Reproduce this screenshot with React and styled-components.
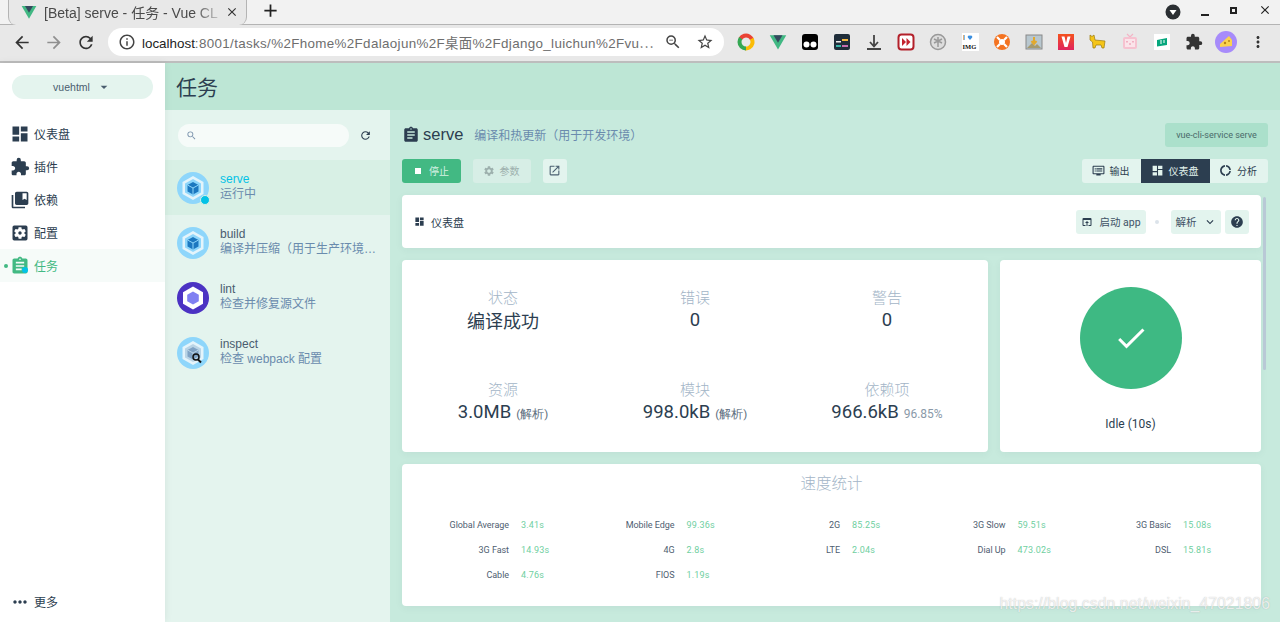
import React from "react";
import styled, { createGlobalStyle } from "styled-components";
import {
  MdDashboard, MdExtension, MdCollectionsBookmark, MdSettingsApplications, MdAssignment,
  MdMoreHoriz, MdRefresh, MdSearch, MdStop, MdSettings, MdOpenInNew, MdDvr, MdDonutLarge,
  MdOpenInBrowser, MdHelp, MdCheck, MdKeyboardArrowDown, MdArrowDropDown, MdArrowBack, MdArrowForward,
  MdClose, MdAdd, MdMoreVert, MdInfoOutline, MdZoomOut, MdStarBorder,
} from "react-icons/md";

const Global = createGlobalStyle`
  html, body { margin: 0; padding: 0; height: 622px; overflow: hidden; background: #fff; }
  body { font-family: Roboto, "Noto Sans CJK SC", sans-serif; color: #2c3e50; }
  * { box-sizing: border-box; }
`;

const Page = styled.div`
  width: 1280px; height: 622px; display: flex; flex-direction: column; overflow: hidden; position: relative;
`;

/* Browser chrome */
const TabStrip = styled.div`
  height: 25px; background: #f2f2f2; border-bottom: 1px solid #b4b4b4; display: flex; align-items: flex-end; padding-left: 8px; flex: none;
`;
const BrowserTab = styled.div`
  width: 239px; height: 25px; margin-bottom: -1px; background: #e8e8e8; border-radius: 0 0 8px 8px; border: 1px solid #b4b4b4; border-top: 0; border-bottom: 0;
  display: flex; align-items: center; padding: 0 7px 2px 12px; gap: 7px; font: 14px "Liberation Sans", "Noto Sans CJK SC", sans-serif; color: #4a4a4a;
`;
const TabTitle = styled.span`
  flex: 1; white-space: nowrap; overflow: hidden;
  -webkit-mask-image: linear-gradient(90deg, #000 86%, rgba(0,0,0,.25));
  mask-image: linear-gradient(90deg, #000 86%, rgba(0,0,0,.25));
`;
const NewTab = styled.div`
  margin-left: 13px; height: 25px; display: flex; align-items: center; color: #222; font-size: 21px; padding-bottom: 2px;
`;
const WindowButtons = styled.div`
  margin-left: auto; height: 24px; display: flex; align-items: center; padding-right: 8px; color: #222;
`;
const ProfileDot = styled.svg`
  width: 16px; height: 16px; margin-right: 20px;
`;
const WinMin = styled.span`
  width: 8px; height: 2px; background: #222; margin: 5px 21px 0 0;
`;
const WinMax = styled.span`
  width: 7px; height: 7px; border: 2px solid #222; margin: 0 21px 4px 0;
`;
const WinClose = styled(MdClose)`
  font-size: 14px; margin-bottom: 4px;
`;
const Toolbar = styled.div`
  height: 38px; background: #e8e8e8; border-bottom: 2px solid #bdbdbd; display: flex; align-items: center; padding: 0 13px 2px 12px; flex: none;
`;
const NavBtn = styled.div`
  width: 20px; height: 20px; margin-right: 12px; font-size: 21px; display: flex; align-items: center; justify-content: center; color: ${p => p.$dim ? "#8f8f8f" : "#333"};
`;
const Omnibox = styled.div`
  width: 616px; height: 28px; margin-left: 0; border-radius: 14px; background: #fff; display: flex; align-items: center; padding: 0 10px 0 10px; color: #333;
`;
const Url = styled.div`
  margin-left: 6px; flex: 1; white-space: nowrap; overflow: hidden; font: 13.4px "Liberation Sans", "Noto Sans CJK SC", sans-serif; color: #6e6e6e;
  letter-spacing: .34px;
  b { font-weight: 400; color: #222; letter-spacing: 0; }
`;
const OmniIcon = styled.span`
  display: flex; font-size: 18px; margin-left: ${p => p.$gap || 0}px; color: #444;
`;
const Extensions = styled.div`
  display: flex; margin-left: 13px; flex: 1; justify-content: space-between; align-items: center;
`;
const ExtSlot = styled.div`
  width: 18px; height: 18px; display: flex; align-items: center; justify-content: center; font-size: 18px; color: #333;
  svg { flex: none; }
`;

/* App layout */
const AppFrame = styled.div`
  flex: 1; display: flex; min-height: 0;
`;
const Sidebar = styled.aside`
  width: 165px; flex: none; background: #fff; display: flex; flex-direction: column; position: relative; z-index: 2; box-shadow: 0 0 8px rgba(0,0,0,.07); padding-bottom: 4px;
`;
const ProjectButton = styled.div`
  margin: 12px 12px 18px; height: 24px; border-radius: 12px; background: #e4f4ee; display: flex; align-items: center; justify-content: center; gap: 6px; font-size: 10.5px; font-family: "Liberation Sans", sans-serif; color: #4a5d6e;
  svg { font-size: 16px; color: #4a5d6e; }
`;
const NavItem = styled.div`
  height: 33px; display: flex; align-items: center; padding-left: 10px; gap: 4px; font-size: 12px; position: relative;
  background: ${p => p.$active ? "#f6fbf9" : "transparent"};
  color: ${p => p.$active ? "#42b983" : "#2c3e50"};
  svg { font-size: 20px; flex: none; color: ${p => p.$active ? "#42b983" : "#2c3e50"}; }
`;
const ActiveDot = styled.span`
  position: absolute; left: 4px; top: 15px; width: 4px; height: 4px; border-radius: 50%; background: #42b983;
`;
const NavBadge = styled.span`
  position: absolute; left: 22px; top: 18px; width: 6px; height: 6px; border-radius: 50%; background: #03c2e6;
`;
const MoreItem = styled(NavItem)`
  margin-top: auto;
  height: 33px;
`;
const Main = styled.main`
  flex: 1; display: flex; flex-direction: column; min-width: 0;
`;
const TopBar = styled.header`
  height: 47px; flex: none; background: #bde6d5; display: flex; align-items: center; padding: 0 12px 2px 11px; font-size: 21px; color: #2c3e50;
`;
const Split = styled.div`
  flex: 1; display: flex; min-height: 0;
`;
const TaskList = styled.section`
  width: 225px; flex: none; background: #e4f4ee; display: flex; flex-direction: column;
`;
const SearchRow = styled.div`
  height: 50px; flex: none; display: flex; align-items: center; padding: 0 12px 0 13px; gap: 10px;
`;
const SearchField = styled.div`
  width: 171px; height: 23px; border-radius: 12px; background: #f6fbf9; display: flex; align-items: center; padding-left: 8px; color: #7b93ad; font-size: 11px;
`;
const RefreshIcon = styled(MdRefresh)`
  font-size: 13px; color: #2c3e50;
`;
const TaskItem = styled.div`
  height: 55px; flex: none; display: flex; align-items: center; padding: 0 12px; gap: 11px;
  background: ${p => p.$active ? "#d8f0e5" : "transparent"};
`;
const TaskIconWrap = styled.div`
  width: 32px; height: 32px; flex: none; position: relative;
  svg { display: block; }
`;
const TaskDot = styled.span`
  position: absolute; right: 0; bottom: 0; width: 8px; height: 8px; border-radius: 50%; background: #03c2e6; border: 1px solid #d8f0e5; box-sizing: content-box; margin: 0 -1px -1px 0;
`;
const TaskText = styled.div`
  min-width: 0; flex: 1; line-height: 15px; font-size: 12px; padding-bottom: 1px; font-family: "Liberation Sans", "Noto Sans CJK SC", sans-serif;
`;
const TaskName = styled.div`
  color: ${p => p.$active ? "#03c2e6" : "#4a5d6e"};
`;
const TaskDesc = styled.div`
  color: #6a8bad; white-space: nowrap;
`;
const Content = styled.section`
  flex: 1; min-width: 0; background: #c7eadd; padding: 13px 12px 0 12px; position: relative;
`;
const TaskHead = styled.div`
  height: 24px; display: flex; align-items: center;
  & > svg { font-size: 18px; margin-left: 0; color: #2c3e50; }
`;
const TaskTitle = styled.span`
  margin: 0 0 1px 3px; font: 16.5px "Liberation Sans", sans-serif; color: #2c3e50;
`;
const TaskSub = styled.span`
  margin: 0 0 2px 11px; font-size: 12px; color: #6a8bad; font-family: "Noto Sans CJK SC", sans-serif;
`;
const CommandBadge = styled.span`
  margin-left: auto; width: 103px; height: 24px; border-radius: 3px; background: #abe0cb; color: #4a6a6a; font-size: 9px; display: flex; align-items: center; justify-content: center;
`;
const ActionRow = styled.div`
  height: 24px; margin-top: 12px; display: flex; align-items: center; gap: 12px;
`;
const ActionButton = styled.button`
  height: 24px; padding: 0 2px 1px 0; width: ${p => p.$w}px; border: 0; border-radius: 3px; font: 10px "Noto Sans CJK SC", sans-serif; display: flex; align-items: center; justify-content: center; gap: 5px;
  background: ${p => p.$bg}; color: ${p => p.$fg};
  svg { font-size: ${p => p.$icon || 12}px; flex: none; }
`;
const ViewTabs = styled.div`
  margin-left: auto; display: flex;
`;
const ViewTab = styled.button`
  height: 24px; width: ${p => p.$w}px; padding: 0 2px 1px 0; border: 0; font: 10px "Noto Sans CJK SC", sans-serif; display: flex; align-items: center; justify-content: center; gap: 5px;
  background: ${p => p.$active ? "#2c3e50" : "#e3f4ee"}; color: ${p => p.$active ? "#e3f4ee" : "#2c3e50"};
  border-radius: ${p => p.$first ? "3px 0 0 3px" : p.$last ? "0 3px 3px 0" : "0"};
  svg { font-size: 13px; flex: none; }
`;
const Cards = styled.div`
  margin-top: 12px; margin-right: 7px; display: flex; flex-direction: column; gap: 12px;
`;
const Card = styled.div`
  background: #fff; border-radius: 4px; box-shadow: 0 2px 8px rgba(44,62,80,.05);
`;
const DashHead = styled(Card)`
  height: 53px; display: flex; align-items: center; padding: 0 12px;
  font-size: 11px;
`;
const DashTitle = styled.span`
  display: flex; align-items: center; gap: 6px; color: #2c3e50;
  svg { font-size: 11px; }
`;
const DashActions = styled.div`
  margin-left: auto; display: flex; align-items: center; gap: 4px;
`;
const DashButton = styled.button`
  height: 24px; width: ${p => p.$w}px; padding: 0; border: 0; border-radius: 3px; background: #e3f4ee; color: #3f5266; font: 10.5px Roboto, "Noto Sans CJK SC", sans-serif; display: flex; align-items: center; justify-content: center; gap: 6px;
  svg { font-size: ${p => p.$icon || 12}px; color: #2c3e50; flex: none; }
`;
const Separator = styled.span`
  width: 4px; height: 4px; border-radius: 50%; background: #dce3ea; margin: 0 8px 0 5px;
`;
const StatsRow = styled.div`
  display: grid; grid-template-columns: 586px 1fr; grid-template-rows: 192px; gap: 12px; height: 192px;
`;
const StatsCard = styled(Card)`
  display: grid; grid-template-columns: repeat(3, 192px); grid-template-rows: 92px 70px; justify-content: center; padding-top: 28px;
`;
const Stat = styled.div`
  display: flex; flex-direction: column; align-items: center;
`;
const StatLabel = styled.div`
  font-size: 15px; line-height: 21px; color: #a3b5c7; font-weight: 300;
`;
const StatValue = styled.div`
  font-size: ${p => p.$cjk ? 18 : 18.5}px; line-height: 22px; color: #2c3e50; white-space: nowrap; font-family: ${p => p.$cjk ? '"Noto Sans CJK SC", sans-serif' : 'Roboto, sans-serif'};
  small { font-size: ${p => p.$muted ? 12 : 11.5}px; color: ${p => p.$muted ? "#8a99a8" : "#5d6e7e"}; margin-left: 5px; }
`;
const IdleCard = styled(Card)`
  display: flex; flex-direction: column; align-items: center; padding-top: 27px;
  font-size: 12px; color: #2c3e50;
`;
const IdleCircle = styled.div`
  width: 102px; height: 102px; border-radius: 50%; background: #3eb983; display: flex; align-items: center; justify-content: center; color: #fff; font-size: 36px; margin-bottom: 28px;
`;
const SpeedCard = styled(Card)`
  height: 142px; padding-top: 10px;
`;
const SpeedTitle = styled.div`
  text-align: center; font-size: 15.5px; line-height: 20px; color: #a3b5c7; font-weight: 300; margin-bottom: 18px;
`;
const SpeedGrid = styled.div`
  display: grid; grid-template-columns: repeat(5, 165.5px); grid-auto-rows: 25px; padding-left: 0;
`;
const SpeedCell = styled.div`
  display: grid; grid-template-columns: 107px auto; column-gap: 12px; align-items: center; font-size: 9px;
`;
const SpeedName = styled.span`
  text-align: right; color: #4f6071; white-space: nowrap; letter-spacing: -.05px;
`;
const SpeedVal = styled.span`
  color: #6fcf9f; letter-spacing: .2px;
`;
const ScrollThumb = styled.div`
  position: absolute; right: 14px; top: 87px; width: 3px; height: 173px; background: #b9c9d6; border-radius: 2px;
`;
const Watermark = styled.div`
  position: absolute; right: 10px; bottom: 9px; font: 15.7px "Liberation Sans", sans-serif; color: rgba(255,255,255,.75); text-shadow: 0 0 1px rgba(120,120,120,.5); letter-spacing: .1px;
`;

/* Drawings */
const VueLogo = ({ s = 16 }) => (
  <svg width={s} height={s} viewBox="0 0 24 24"><path d="M1 3h22L12 22z" fill="#41b883" /><path d="M6 3h12l-6 10z" fill="#35495e" /></svg>
);
const WebpackIcon = ({ dim, children }) => (
  <svg width="32" height="32" viewBox="0 0 32 32">
    <circle cx="16" cy="16" r="16" fill="#8ed6fb" />
    <path d="M16 4l10.5 6v12L16 28 5.5 22V10z" fill="#e4f4fb" />
    <path d="M16 7l8 4.6v8.8L16 25l-8-4.6v-8.8z" fill={dim ? "#b9d4e6" : "#8ed6fb"} />
    <path d="M16 10l5.5 3v6.4L16 22.5l-5.5-3.1V13z" fill={dim ? "#7fa2c4" : "#1c78c0"} />
    <path d="M10.5 13l5.5 3 5.5-3M16 16v6.5" stroke={dim ? "#b9d4e6" : "#8ed6fb"} strokeWidth="1" fill="none" />
    {children}
  </svg>
);
const LintIcon = () => (
  <svg width="32" height="32" viewBox="0 0 32 32">
    <circle cx="16" cy="16" r="16" fill="#4b32c3" />
    <path d="M16 4.5l10 5.8v11.4l-10 5.8-10-5.8V10.300z" fill="#fff" />
    <path d="M16 9.500l5.800 3.300v6.400L16 22.500l-5.800-3.300v-6.400z" fill="#8080f2" />
  </svg>
);
const Ext = {
  chrome: <svg width="18" height="18" viewBox="0 0 18 18"><circle cx="9" cy="9" r="6.5" fill="none" stroke="#ea4335" strokeWidth="4" strokeDasharray="14 100" transform="rotate(-150 9 9)" /><circle cx="9" cy="9" r="6.500" fill="none" stroke="#fbbc05" strokeWidth="4" strokeDasharray="14 100" transform="rotate(-30 9 9)" /><circle cx="9" cy="9" r="6.500" fill="none" stroke="#34a853" strokeWidth="4" strokeDasharray="14 100" transform="rotate(90 9 9)" /></svg>,
  tamper: <svg width="18" height="18" viewBox="0 0 18 18"><rect x="1" y="1" width="16" height="16" rx="3" fill="#000" /><circle cx="5.500" cy="11.500" r="3" fill="#fff" /><circle cx="12.500" cy="11.500" r="3" fill="#fff" /></svg>,
  bars: <svg width="18" height="18" viewBox="0 0 18 18"><rect x="1" y="1" width="16" height="16" rx="2" fill="#1f2d3a" /><rect x="9" y="6" width="6" height="2" fill="#f5b841" /><rect x="3" y="8" width="5" height="1.500" fill="#eee" /><rect x="3" y="12" width="5" height="2" fill="#36b3a8" /><rect x="9" y="12" width="6" height="2" fill="#c56fb0" /></svg>,
  down: <svg width="18" height="18" viewBox="0 0 18 18"><path d="M9 2v11M5 9l4 4.500L13 9M2 16h14" stroke="#444" strokeWidth="1.800" fill="none" /></svg>,
  ff: <svg width="18" height="18" viewBox="0 0 18 18"><rect x="1.500" y="1.500" width="15" height="15" rx="3" fill="#fff" stroke="#b3202a" strokeWidth="2" /><path d="M5 5l4 4-4 4zM9.500 5l4 4-4 4z" fill="#c4232e" /></svg>,
  palm: <svg width="18" height="18" viewBox="0 0 18 18"><circle cx="9" cy="9" r="7.500" fill="#ddd" stroke="#999" strokeWidth="1.500" /><path d="M9 4v10M5 6l8 4M13 6l-8 4" stroke="#999" strokeWidth="1.500" /></svg>,
  img: <svg width="18" height="18" viewBox="0 0 18 18"><rect x="1" y="0" width="17" height="18" fill="#fff" /><path d="M9 7L6.800 4.500a1.500 1.500 0 0 1 2.200-1.800 1.500 1.500 0 0 1 2.200 1.800z" fill="#3a8fe0" /><text x="2" y="7" fontSize="7" fontFamily="Liberation Sans" fill="#111">I</text><text x="1.500" y="16" fontSize="6.500" fontWeight="700" fontFamily="Liberation Serif" fill="#111">IMG</text></svg>,
  buoy: <svg width="18" height="18" viewBox="0 0 18 18"><circle cx="9" cy="9" r="8" fill="#f47321" /><circle cx="9" cy="9" r="3" fill="#fff" /><path d="M4 4l3 3M14 4l-3 3M4 14l3-3M14 14l-3-3" stroke="#fff" strokeWidth="2.200" /></svg>,
  pic: <svg width="18" height="18" viewBox="0 0 18 18"><rect x="1" y="2" width="16" height="14" fill="#b8c7cf" stroke="#888" /><path d="M2 15l5-5 3 3 2-2 4 4z" fill="#a59a6e" /><path d="M9 4v6M6.500 8L9 11l2.500-3" stroke="#e2a92c" strokeWidth="2" fill="none" /></svg>,
  vid: <svg width="18" height="18" viewBox="0 0 18 18"><defs><linearGradient id="vg" x1="0" y1="0" x2="0" y2="1"><stop offset="0" stopColor="#f4511e" /><stop offset="1" stopColor="#e0245e" /></linearGradient></defs><rect x="1" y="1" width="16" height="16" fill="url(#vg)" /><path d="M4.500 3.500h3L9 10l1.500-6.500h3L10.500 14h-3z" fill="#fff" /></svg>,
  cat: <svg width="18" height="18" viewBox="0 0 18 18"><path d="M1 2l2 1.500L5 2l1 5 10 1-1 7h-2l-1-3H7l-1 3H4l-.5-6L1 7z" fill="#f5c518" stroke="#9a7a10" strokeWidth=".7" /></svg>,
  tv: <svg width="18" height="18" viewBox="0 0 18 18"><path d="M6 1l3 3 3-3" stroke="#f3b4c6" strokeWidth="1.200" fill="none" /><rect x="2" y="4" width="14" height="12" rx="2" fill="#f6c2d0" /><rect x="4" y="6" width="10" height="8" fill="#fbe4ea" /><path d="M6 8v1.500M12 8v1.500M8 11h2" stroke="#ea8fa8" strokeWidth="1.200" /></svg>,
  book: <svg width="18" height="18" viewBox="0 0 18 18"><rect x="1" y="1" width="16" height="16" fill="#fff" /><path d="M4 7l5-1 5-1v7l-5 .8-5 .6z" fill="#06a77d" /><path d="M8 7v4M11 7v3" stroke="#fff" /></svg>,
  avatar: <svg width="22" height="22" viewBox="0 0 22 22"><circle cx="11" cy="11" r="11" fill="#a78bfa" /><path d="M5 13l9-8 3 4v6l-12 1z" fill="#fbd34d" /><circle cx="10" cy="12" r="1.200" fill="#b98512" /><circle cx="14" cy="10" r="1" fill="#b98512" /></svg>,
};

const speed = [
  ["Global Average", "3.41s"], ["Mobile Edge", "99.36s"], ["2G", "85.25s"], ["3G Slow", "59.51s"], ["3G Basic", "15.08s"],
  ["3G Fast", "14.93s"], ["4G", "2.8s"], ["LTE", "2.04s"], ["Dial Up", "473.02s"], ["DSL", "15.81s"],
  ["Cable", "4.76s"], ["FIOS", "1.19s"],
];

export default function App() {
  return (
    <Page>
      <Global />
      <TabStrip>
        <BrowserTab>
          <VueLogo />
          <TabTitle>[Beta] serve - 任务 - Vue CL</TabTitle>
          <MdClose size={14} color="#333" />
        </BrowserTab>
        <NewTab><MdAdd /></NewTab>
        <WindowButtons>
          <ProfileDot viewBox="0 0 16 16"><circle cx="8" cy="8" r="7.500" fill="#2b2f33" /><path d="M4.500 6h7L8 11z" fill="#fff" /></ProfileDot>
          <WinMin /><WinMax /><WinClose />
        </WindowButtons>
      </TabStrip>
      <Toolbar>
        <NavBtn><MdArrowBack /></NavBtn>
        <NavBtn $dim><MdArrowForward /></NavBtn>
        <NavBtn><MdRefresh /></NavBtn>
        <Omnibox>
          <OmniIcon><MdInfoOutline /></OmniIcon>
          <Url><b>localhost</b>:8001/tasks/%2Fhome%2Fdalaojun%2F桌面%2Fdjango_luichun%2Fvu⋯</Url>
          <OmniIcon><MdZoomOut /></OmniIcon>
          <OmniIcon $gap={14}><MdStarBorder /></OmniIcon>
        </Omnibox>
        <Extensions>
          <ExtSlot>{Ext.chrome}</ExtSlot>
          <ExtSlot><VueLogo s={18} /></ExtSlot>
          <ExtSlot>{Ext.tamper}</ExtSlot>
          <ExtSlot>{Ext.bars}</ExtSlot>
          <ExtSlot>{Ext.down}</ExtSlot>
          <ExtSlot>{Ext.ff}</ExtSlot>
          <ExtSlot>{Ext.palm}</ExtSlot>
          <ExtSlot>{Ext.img}</ExtSlot>
          <ExtSlot>{Ext.buoy}</ExtSlot>
          <ExtSlot>{Ext.pic}</ExtSlot>
          <ExtSlot>{Ext.vid}</ExtSlot>
          <ExtSlot>{Ext.cat}</ExtSlot>
          <ExtSlot>{Ext.tv}</ExtSlot>
          <ExtSlot>{Ext.book}</ExtSlot>
          <ExtSlot><MdExtension /></ExtSlot>
          <ExtSlot>{Ext.avatar}</ExtSlot>
          <ExtSlot><MdMoreVert /></ExtSlot>
        </Extensions>
      </Toolbar>
      <AppFrame>
        <Sidebar>
          <ProjectButton>vuehtml <MdArrowDropDown /></ProjectButton>
          <NavItem><MdDashboard />仪表盘</NavItem>
          <NavItem><MdExtension />插件</NavItem>
          <NavItem><MdCollectionsBookmark />依赖</NavItem>
          <NavItem><MdSettingsApplications />配置</NavItem>
          <NavItem $active><ActiveDot /><MdAssignment /><NavBadge />任务</NavItem>
          <MoreItem><MdMoreHoriz />更多</MoreItem>
        </Sidebar>
        <Main>
          <TopBar>任务</TopBar>
          <Split>
            <TaskList>
              <SearchRow>
                <SearchField><MdSearch /></SearchField>
                <RefreshIcon />
              </SearchRow>
              <TaskItem $active>
                <TaskIconWrap><WebpackIcon /><TaskDot /></TaskIconWrap>
                <TaskText><TaskName $active>serve</TaskName><TaskDesc>运行中</TaskDesc></TaskText>
              </TaskItem>
              <TaskItem>
                <TaskIconWrap><WebpackIcon /></TaskIconWrap>
                <TaskText><TaskName>build</TaskName><TaskDesc>编译并压缩（用于生产环境…</TaskDesc></TaskText>
              </TaskItem>
              <TaskItem>
                <TaskIconWrap><LintIcon /></TaskIconWrap>
                <TaskText><TaskName>lint</TaskName><TaskDesc>检查并修复源文件</TaskDesc></TaskText>
              </TaskItem>
              <TaskItem>
                <TaskIconWrap>
                  <WebpackIcon dim>
                    <circle cx="19" cy="20" r="3" fill="none" stroke="#111" strokeWidth="1.500" />
                    <path d="M21 22.500l3 3" stroke="#111" strokeWidth="2" />
                  </WebpackIcon>
                </TaskIconWrap>
                <TaskText><TaskName>inspect</TaskName><TaskDesc>检查 webpack 配置</TaskDesc></TaskText>
              </TaskItem>
            </TaskList>
            <Content>
              <TaskHead>
                <MdAssignment />
                <TaskTitle>serve</TaskTitle>
                <TaskSub>编译和热更新（用于开发环境）</TaskSub>
                <CommandBadge>vue-cli-service serve</CommandBadge>
              </TaskHead>
              <ActionRow>
                <ActionButton $w={59} $bg="#42b983" $fg="#d6f1e4"><MdStop style={{ color: "#fff" }} />停止</ActionButton>
                <ActionButton $w={58} $bg="#d7eee6" $fg="#9db0ad"><MdSettings />参数</ActionButton>
                <ActionButton $w={24} $bg="#e3f4ee" $fg="#4b5f70" $icon={13}><MdOpenInNew /></ActionButton>
                <ViewTabs>
                  <ViewTab $first $w={59}><MdDvr />输出</ViewTab>
                  <ViewTab $active $w={69}><MdDashboard />仪表盘</ViewTab>
                  <ViewTab $last $w={58}><MdDonutLarge />分析</ViewTab>
                </ViewTabs>
              </ActionRow>
              <Cards>
                <DashHead>
                  <DashTitle><MdDashboard />仪表盘</DashTitle>
                  <DashActions>
                    <DashButton $w={70}><MdOpenInBrowser />启动 app</DashButton>
                    <Separator />
                    <DashButton $w={50} $icon={14}>解析<MdKeyboardArrowDown /></DashButton>
                    <DashButton $w={24} $icon={14}><MdHelp /></DashButton>
                  </DashActions>
                </DashHead>
                <StatsRow>
                  <StatsCard>
                    <Stat><StatLabel>状态</StatLabel><StatValue $cjk>编译成功</StatValue></Stat>
                    <Stat><StatLabel>错误</StatLabel><StatValue>0</StatValue></Stat>
                    <Stat><StatLabel>警告</StatLabel><StatValue>0</StatValue></Stat>
                    <Stat><StatLabel>资源</StatLabel><StatValue>3.0MB<small>(解析)</small></StatValue></Stat>
                    <Stat><StatLabel>模块</StatLabel><StatValue>998.0kB<small>(解析)</small></StatValue></Stat>
                    <Stat><StatLabel>依赖项</StatLabel><StatValue $muted>966.6kB<small>96.85%</small></StatValue></Stat>
                  </StatsCard>
                  <IdleCard>
                    <IdleCircle><MdCheck /></IdleCircle>
                    Idle (10s)
                  </IdleCard>
                </StatsRow>
                <SpeedCard>
                  <SpeedTitle>速度统计</SpeedTitle>
                  <SpeedGrid>
                    {speed.map(([n, v]) => (
                      <SpeedCell key={n}><SpeedName>{n}</SpeedName><SpeedVal>{v}</SpeedVal></SpeedCell>
                    ))}
                  </SpeedGrid>
                </SpeedCard>
              </Cards>
              <ScrollThumb />
            </Content>
          </Split>
        </Main>
      </AppFrame>
      <Watermark>https://blog.csdn.net/weixin_47021806</Watermark>
    </Page>
  );
}
